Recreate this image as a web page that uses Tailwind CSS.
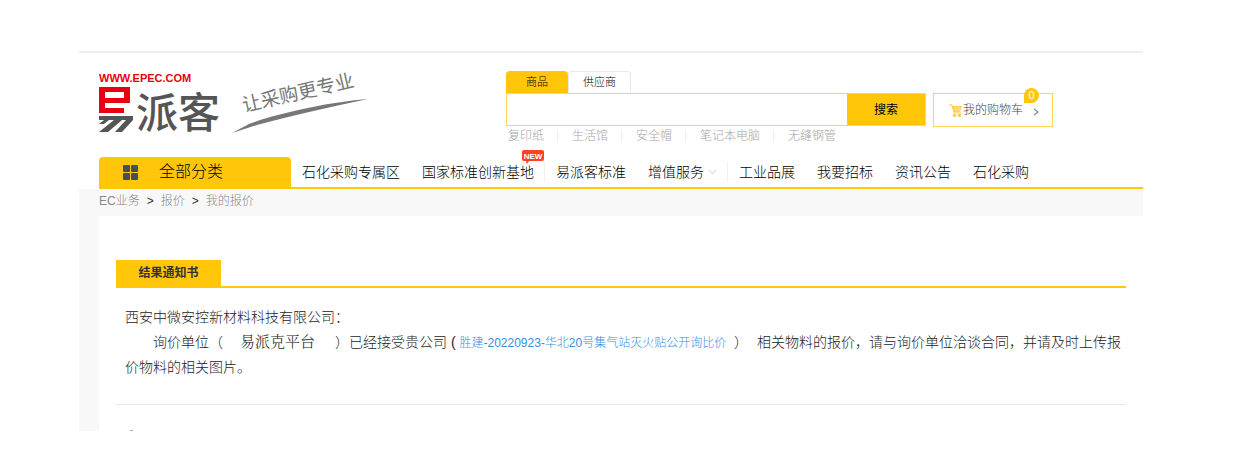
<!DOCTYPE html>
<html lang="zh-CN">
<head>
    <meta charset="UTF-8">
    <meta name="viewport" content="width=device-width, initial-scale=1.0">
    <title>易派客 - 结果通知书</title>
    <script src="https://cdn.jsdelivr.net/npm/@tailwindcss/browser@4"></script>
</head>
<body class="bg-white font-['Liberation_Sans','Noto_Sans_CJK_SC',sans-serif] font-light text-[#333]">
    <div class="pt-[51px] pl-[79px] pr-[97px]">
        <!-- Header -->
        <header class="border-t-2 border-[#eee] pl-5">
            <div class="flex items-start h-[104px] pt-[18px]">
                <a href="#" aria-label="易派客" class="shrink-0 w-[407px]">
                    <svg class="block" width="275" height="68" viewBox="0 0 275 68">
                        <text x="0" y="11" font-size="11" font-weight="700" fill="#e60012">WWW.EPEC.COM</text>
                        <path d="M0 16H31V32H6V37H25V42H0ZM6 21V27H25V21Z" fill="#e60012" fill-rule="evenodd"/>
                        <path d="M0 45H34V49L23 61H16L27 49H23L9 61H0L15 49H10L5 53H0L5 49H0Z" fill="#555"/>
                        <text x="37" y="57" font-size="42" font-weight="500" fill="#555">派客</text>
                        <text font-size="19" font-weight="400" fill="#777" transform="translate(145 41) rotate(-13)">让采购更专业</text>
                        <path d="M133 62L150 53L161 49C195 39 232 31 269 28C228 37 190 45 158 54Z" fill="#777"/>
                    </svg>
                </a>
                <form class="shrink-0 w-[420px]">
                    <div class="flex text-[11px] leading-[22px] text-black">
                        <button type="button" class="w-[62px] h-[22px] rounded-t bg-[#ffc60a]">商品</button>
                        <button type="button" class="w-[63px] h-[22px] rounded-t border border-b-0 border-[#e8e8e8] leading-[21px]">供应商</button>
                    </div>
                    <div class="flex h-[33px] border border-[#ffd65a]">
                        <input type="text" aria-label="搜索商品" class="flex-1 min-w-0 px-2 outline-none text-xs">
                        <button type="submit" class="w-[78px] bg-[#ffc60a] text-xs font-normal text-black">搜索</button>
                    </div>
                    <div class="flex items-center h-5 pl-[2px] text-xs leading-[18px] text-[#a5a5a5]">
                        <a href="#">复印纸</a>
                        <i class="w-px h-3 bg-[#e8e8e8] ml-[13px] mr-[14px]"></i>
                        <a href="#">生活馆</a>
                        <i class="w-px h-3 bg-[#e8e8e8] ml-[13px] mr-[14px]"></i>
                        <a href="#">安全帽</a>
                        <i class="w-px h-3 bg-[#e8e8e8] ml-[13px] mr-[14px]"></i>
                        <a href="#">笔记本电脑</a>
                        <i class="w-px h-3 bg-[#e8e8e8] ml-[13px] mr-[14px]"></i>
                        <a href="#">无缝钢管</a>
                    </div>
                </form>
                <a href="#" class="relative shrink-0 flex items-center w-[120px] h-[34px] mt-[22px] ml-[7px] pl-[15px] border border-[#ffd65a] text-xs text-[#444]">
                    <svg class="w-[14px] h-[13px]" viewBox="0 0 14 13">
                        <path d="M0 1H3L5 9H12" fill="none" stroke="#ffc83c"/>
                        <path d="M3 2H13L11 8H5Z" fill="#ffc83c"/>
                        <path d="M4 4H13M4 6H12M7 2V8M10 2V8" stroke="#fff" stroke-width=".4"/>
                        <circle cx="5.500" cy="11.300" r="1.600" fill="#ffc83c"/>
                        <circle cx="10.500" cy="11.300" r="1.600" fill="#ffc83c"/>
                    </svg>
                    <span>我的购物车</span>
                    <svg class="w-[6px] h-2 ml-[10px] mt-1" viewBox="0 0 6 8"><path d="M1 1L5 4L1 7" fill="none" stroke="#888" stroke-width="1.200"/></svg>
                    <span class="absolute -top-[6px] right-[13px] w-[15px] h-[15px] rounded-full rounded-bl-none bg-[#ffc60a] text-white text-[11px] leading-[15px] text-center">0</span>
                </a>
            </div>

            <!-- Main menu -->
            <nav class="flex h-8 border-b-2 border-[#ffc60a] text-sm text-black">
                <button type="button" class="shrink-0 flex items-center w-[192px] pl-6 rounded-t bg-[#ffc60a] text-base text-black">
                    <svg class="w-[15px] h-[15px] mr-[21px]" viewBox="0 0 15 15" fill="#444f57">
                        <rect width="7" height="7" rx="1"/>
                        <rect x="8" width="7" height="7" rx="1"/>
                        <rect y="8" width="7" height="7" rx="1"/>
                        <rect x="8" y="8" width="7" height="7" rx="1"/>
                    </svg>
                    全部分类
                </button>
                <div class="flex items-center whitespace-nowrap">
                    <a href="#" class="px-[11px]">石化采购专属区</a>
                    <a href="#" class="relative pl-[11px] pr-[10px] border-r border-[#f0f0f0]">国家标准创新基地
                        <svg class="absolute -top-[12px] right-0 w-[22px] h-[14px]" viewBox="0 0 22 14">
                            <path d="M2 0H20Q22 0 22 2V9Q22 11 20 11H7L5 14L4 11H2Q0 11 0 9V2Q0 0 2 0Z" fill="#ff4128"/>
                            <text x="11" y="9" text-anchor="middle" font-size="8" font-weight="700" fill="#fff">NEW</text>
                        </svg>
                    </a>
                    <a href="#" class="px-[11px]">易派客标准</a>
                    <a href="#" class="flex items-center gap-1 pl-[11px] pr-[10px] border-r border-[#f0f0f0]">增值服务
                        <svg class="w-[9px] h-[5px]" viewBox="0 0 9 5"><path d="M1 0L4.500 4L8 0" fill="none" stroke="#ccc"/></svg>
                    </a>
                    <a href="#" class="px-[11px]">工业品展</a>
                    <a href="#" class="px-[11px]">我要招标</a>
                    <a href="#" class="px-[11px]">资讯公告</a>
                    <a href="#" class="px-[11px]">石化采购</a>
                </div>
            </nav>
        </header>

        <!-- Content -->
        <main class="bg-[#f8f8f8] pl-5">
            <div class="flex items-center gap-[7px] h-[27px] pb-1 text-xs text-[#888]">
                <a href="#">EC业务</a><b class="text-[#333]">&gt;</b>
                <a href="#">报价</a><b class="text-[#333]">&gt;</b>
                <a href="#">我的报价</a>
            </div>
            <section class="bg-white pt-11 px-[17px]">
                <div class="flex border-b-2 border-[#ffc60a]">
                    <h1 class="w-[105px] h-[26px] bg-[#ffc60a] text-center text-xs leading-[26px] font-bold">结果通知书</h1>
                </div>
                <div class="pt-[17px] pl-[9px] pb-6 text-sm leading-[25px] text-[#222]">
                    <p>西安中微安控新材料科技有限公司：</p>
                    <p class="indent-7">询价单位（<span class="ml-[17px] mr-5 text-[15px] font-['Liberation_Serif','Noto_Serif_CJK_SC','Noto_Sans_CJK_SC',serif]">易派克平台</span>）已经接受贵公司 ( <a href="#" class="mr-1 text-xs text-[#338fdd]">胜建-20220923-华北20号集气站灭火贴公开询比价</a> ）<span class="ml-[9px]">相关物料的报价，请与询价单位洽谈合同，并请及时上传报价物料的相关图片。</span></p>
                </div>
                <hr class="border-[#e8e8e8]">
                <!-- Next block, only its first stroke is visible -->
                <div class="flex items-end h-[26px] pl-[14px]">
                    <i class="w-[3px] h-px bg-[#aaa]"></i>
                </div>
            </section>
        </main>
    </div>
</body>
</html>
